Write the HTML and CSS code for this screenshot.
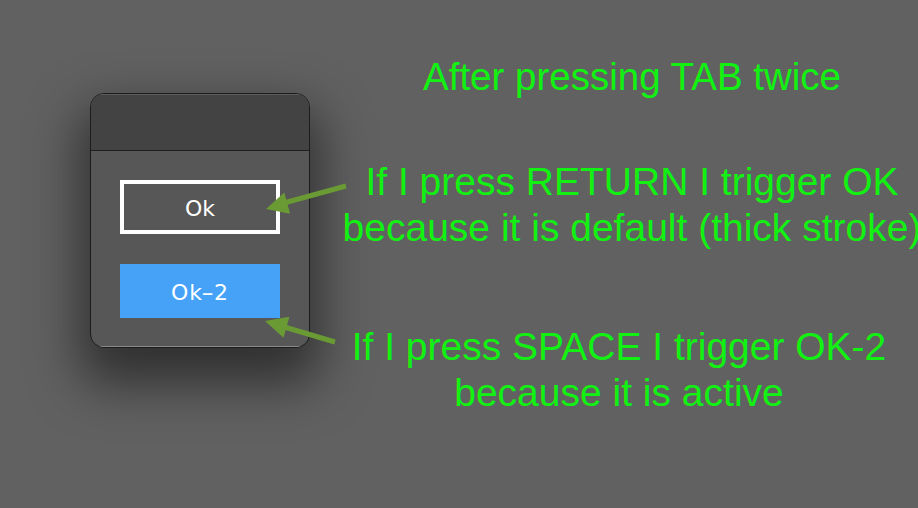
FILE: index.html
```html
<!DOCTYPE html>
<html>
<head>
<meta charset="utf-8">
<link rel="stylesheet" href="styles.css">
</head>
<body>
<div class="page">
  <div class="dialog-col">
    <div class="dialog">
      <div class="titlebar"></div>
      <div class="dialog-body">
        <div class="btn btn-default">Ok</div>
        <div class="btn btn-active">Ok<span class="dash">-</span>2</div>
      </div>
    </div>
  </div>
  <div class="notes">
    <div class="note note-1">After pressing TAB twice</div>
    <div class="note note-2">If I press RETURN I trigger OK<br>because it is default (thick stroke)</div>
    <div class="note note-3">If I press SPACE I trigger OK-2<br>because it is active</div>
  </div>
  <svg class="arrows" width="918" height="508" viewBox="0 0 918 508">
    <line x1="346" y1="186" x2="282" y2="203.5" class="shaft"/>
    <polygon points="266,209 284.3,192.6 290.1,213.8" class="head"/>
    <line x1="335" y1="342" x2="281" y2="326" class="shaft"/>
    <polygon points="265,321 283.5,337.8 289.5,316.8" class="head"/>
  </svg>
</div>
</body>
</html>
```
FILE: styles.css
```css
html, body {
  margin: 0;
  padding: 0;
  background: #616161;
  overflow: hidden;
}
.page {
  position: relative;
  display: flex;
  width: 918px;
  height: 508px;
}
.dialog-col {
  flex: 0 0 auto;
  padding: 93px 0 0 90px;
}
.dialog {
  width: 218px;
  height: 253px;
  border: 1px solid #1c1c1c;
  border-radius: 14px;
  overflow: hidden;
  background: #575757;
  box-shadow: 0 26px 50px 10px rgba(0, 0, 0, 0.5);
  display: flex;
  flex-direction: column;
}
.titlebar {
  height: 56px;
  background: #434343;
  border-bottom: 1px solid #1e1e1e;
  box-shadow: inset 0 1px 0 #5c5c5c;
}
.dialog-body {
  flex: 1;
  display: flex;
  flex-direction: column;
  align-items: center;
  gap: 30px;
  padding-top: 29px;
  box-shadow: inset 0 -1px 0 #8a8a8a;
}
.btn {
  box-sizing: border-box;
  width: 160px;
  height: 54px;
  display: flex;
  align-items: center;
  justify-content: center;
  color: #ffffff;
  font-family: "DejaVu Sans", "Open Sans", sans-serif;
  font-size: 22px;
  padding-top: 2px;
}
.btn-default {
  border: 4px solid #ffffff;
  background: #575757;
}
.btn-active {
  background: #45a2f6;
  letter-spacing: 1px;
}
.dash {
  display: inline-block;
  margin: 0 1px;
  transform: scaleX(1.6);
}
.notes {
  flex: 0 0 644px;
  display: flex;
  flex-direction: column;
  font-family: "Liberation Sans", Arial, sans-serif;
  font-size: 39px;
  line-height: 46px;
  color: #12f212;
  white-space: nowrap;
  text-align: center;
}
.note-1 {
  margin-top: 53.5px;
  font-size: 38.5px;
}
.note-2 {
  margin-top: 59px;
}
.note-3 {
  margin-top: 73px;
  padding-right: 26px;
}
.arrows {
  position: absolute;
  left: 0;
  top: 0;
  pointer-events: none;
}
.shaft {
  stroke: #6a9a34;
  stroke-width: 5;
}
.head {
  fill: #6a9a34;
}
```
